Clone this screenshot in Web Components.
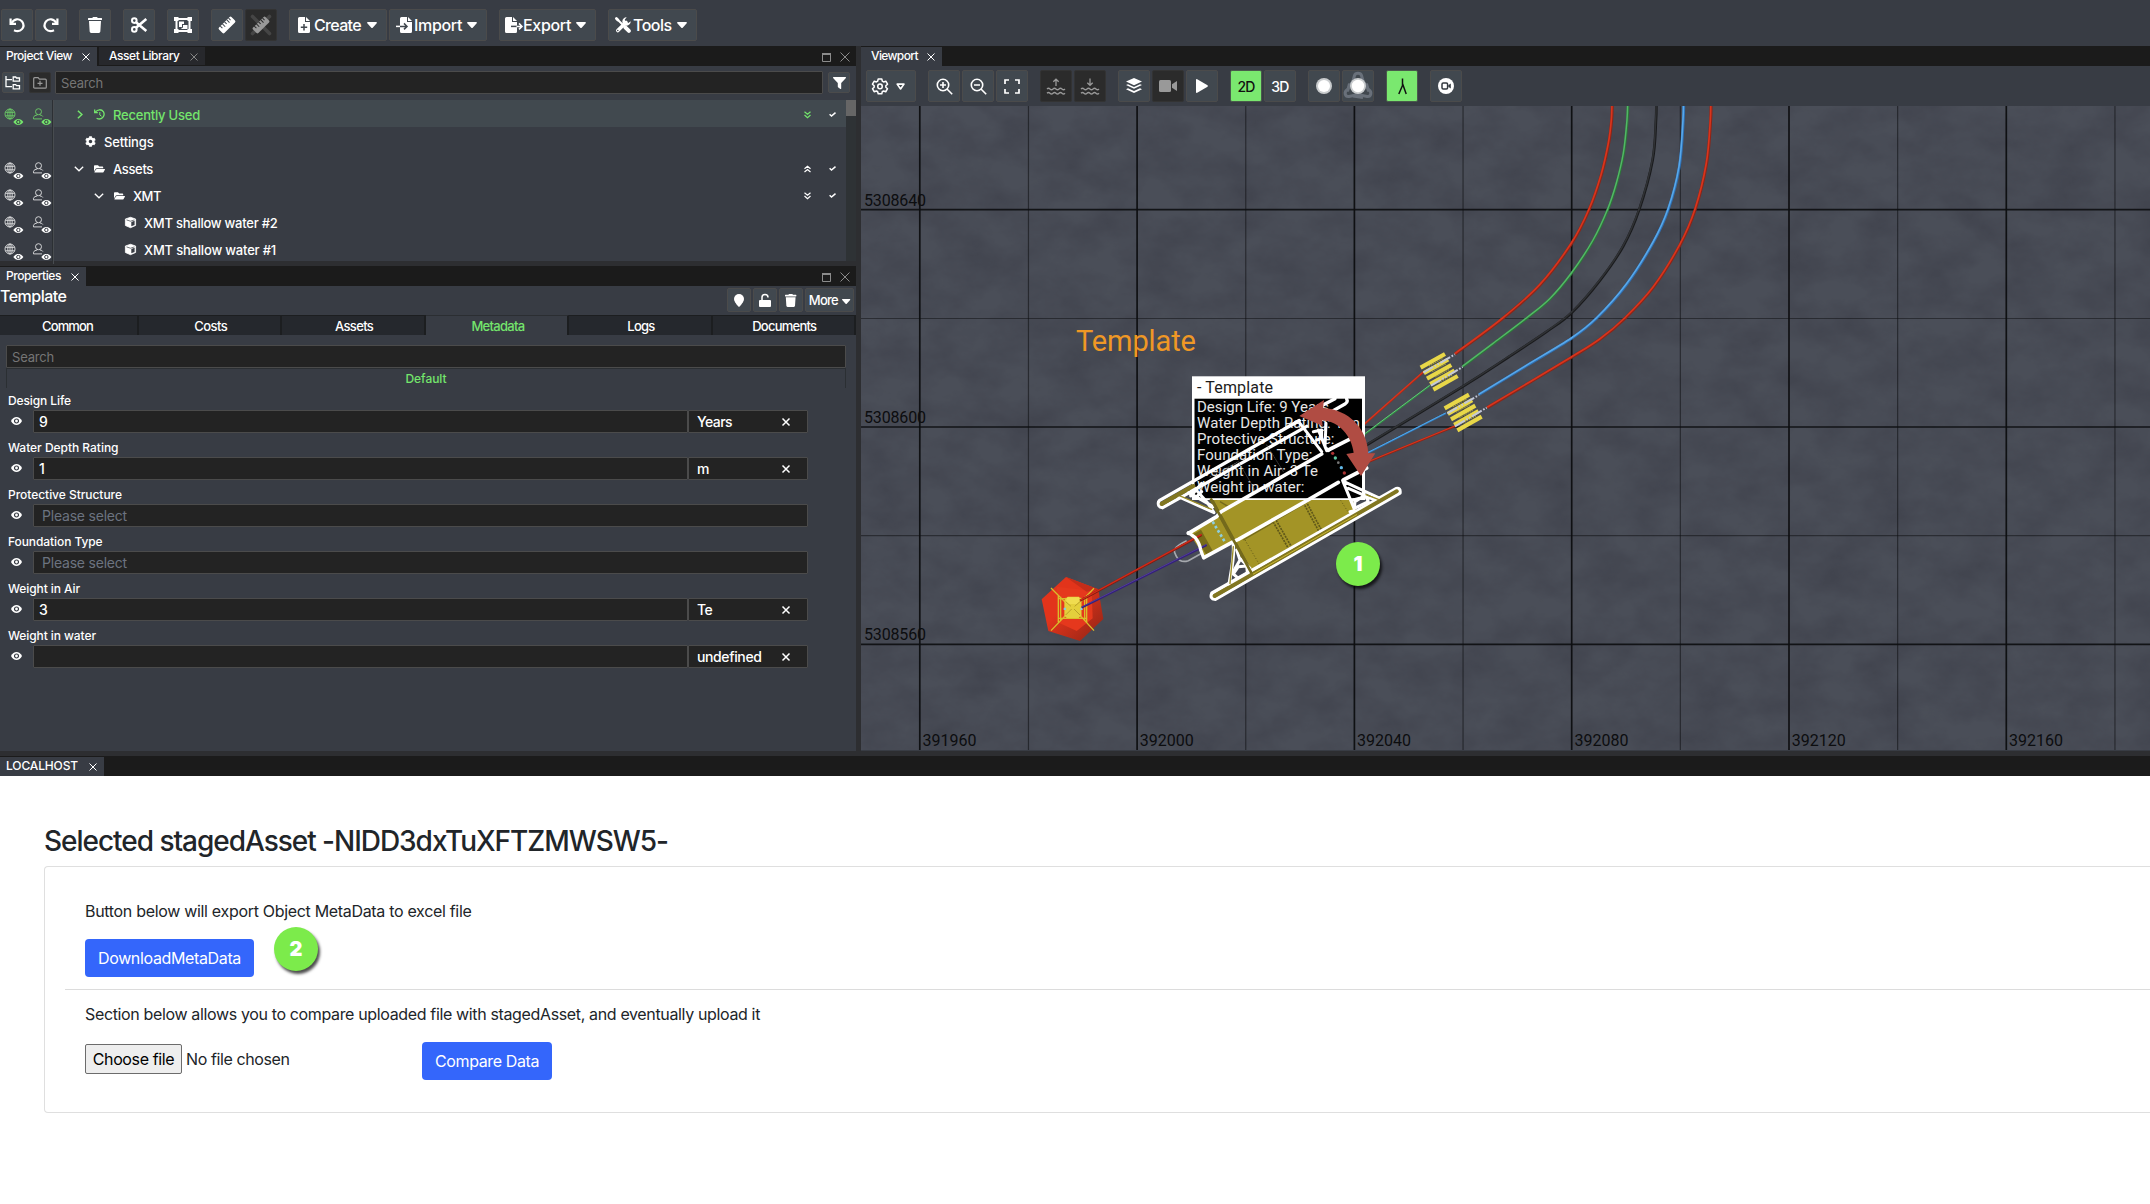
<!DOCTYPE html>
<html lang="en">
<head>
<meta charset="utf-8">
<title>Field planner</title>
<style>
  html, body { margin: 0; height: 1204px; overflow: hidden; background: #fff; }
  body { font-family: Inter, "Liberation Sans", sans-serif; font-size: 14px; color: #fff; }
</style>
</head>
<body>
<field-app></field-app>
<script>
const ICONS = {
  undo: [16, 16, '<g fill="none" stroke="currentColor" stroke-width="2.200"><path d="M1.600 1.600V6.800H7"/><path d="M2.400 6.400C5 1.600 10.200 1 13 4.400 17 10 11.600 16.500 5 13.200"/></g>'],
  redo: [16, 16, '<g fill="none" stroke="currentColor" stroke-width="2.200" transform="matrix(-1 0 0 1 16 0)"><path d="M1.600 1.600V6.800H7"/><path d="M2.400 6.400C5 1.600 10.200 1 13 4.400 17 10 11.600 16.500 5 13.200"/></g>'],
  trash: [14, 16, '<path transform="scale(.03125)" fill="currentColor" d="M432 32H312l-9.400-18.700A24 24 0 0 0 281.100 0H166.800a23.720 23.720 0 0 0-21.400 13.300L136 32H16A16 16 0 0 0 0 48v32a16 16 0 0 0 16 16h416a16 16 0 0 0 16-16V48a16 16 0 0 0-16-16zM32 128 53.200 467a48 48 0 0 0 47.900 45h245.800a48 48 0 0 0 47.900-45L416 128z"/>'],
  cut: [16, 16, '<g fill="none" stroke="currentColor"><circle cx="3.300" cy="3.600" r="2.300" stroke-width="2"/><circle cx="3.300" cy="12.400" r="2.300" stroke-width="2"/><path stroke-width="2.600" d="M5 5.200 15.300 14M5 10.800 15.300 2"/></g>'],
  group: [18, 16, '<g fill="none" stroke="currentColor" stroke-width="2"><path d="M2.500 2h13v12h-13z"/></g><path fill="currentColor" d="M0 0h4.500v4H0zM13.500 0H18v4h-4.500zM0 12h4.500v4H0zM13.500 12H18v4h-4.500zM5 4.500h5V7H8v3H5zM9 8h4.500v4H7.500v-1.200H9z"/>'],
  ruler: [16, 16, '<g transform="rotate(-45 8 8)"><rect x="-.8" y="4.200" width="17.600" height="7.600" rx="1.300" fill="currentColor"/><path d="M2.500 4v3M5.500 4v4M8.500 4v3M11.500 4v4M14 4v3" stroke="#41484f" stroke-width="1"/></g>'],
  rulerOff: [20, 20, '<path d="M1.500 1.500 18.500 18.500M18.500 1.500 1.500 18.500" stroke="#454545" stroke-width="3.600" stroke-linecap="round"/><g transform="translate(2 2) rotate(-45 8 8)"><rect x="-.8" y="4.200" width="17.600" height="7.600" rx="1.300" fill="#999"/><path d="M2.500 4v3M5.500 4v4M8.500 4v3M11.500 4v4M14 4v3" stroke="#2b2b2b"/></g>'],
  fileAdd: [12, 16, '<path fill="currentColor" d="M1.500 0H7v5h5v9.500A1.500 1.500 0 0 1 10.500 16h-9A1.500 1.500 0 0 1 0 14.500v-13A1.500 1.500 0 0 1 1.500 0zM8 0l4 4H8z"/><path d="M6 7v6.400M2.800 10.200h6.400" stroke="#41484f" stroke-width="1.500"/>'],
  fileIn: [16, 16, '<path fill="currentColor" d="M5.500 0H11v5h5v9.500a1.500 1.500 0 0 1-1.500 1.500h-9A1.500 1.500 0 0 1 4 14.500v-13A1.500 1.500 0 0 1 5.500 0zM12 0l4 4h-4z"/><path d="M4 9.400h6.500M8 6.400l3 3-3 3" stroke="#41484f" stroke-width="1.500" fill="none"/><path d="M0 9.400h4" stroke="currentColor" stroke-width="1.500"/>'],
  fileOut: [18, 16, '<path fill="currentColor" d="M1.500 0H7v5h5v9.500A1.500 1.500 0 0 1 10.500 16h-9A1.500 1.500 0 0 1 0 14.500v-13A1.500 1.500 0 0 1 1.500 0zM8 0l4 4H8z"/><path d="M6 9.400h6" stroke="#41484f" stroke-width="1.500"/><path d="M11.500 9.400h5.500M14 6.400l3 3-3 3" stroke="currentColor" stroke-width="1.500" fill="none"/>'],
  tools: [16, 16, '<g stroke="currentColor" stroke-linecap="round"><path d="M2.800 13.600 11 5.400" stroke-width="3.600"/><path d="M3 3l5 5" stroke-width="2"/><path d="M1.400 1.400l1.500 1.500" stroke-width="2.800"/><path d="M10.300 10.300l3.600 3.600" stroke-width="4"/></g><path d="M15.700 4.300a4.200 4.200 0 1 1-4-4L9.800 2.600l.6 2.700 2.900.7z" fill="currentColor"/><circle cx="2.800" cy="13.500" r=".8" fill="#41484f"/>'],
  caret: [10, 6, '<path d="M.9 0h8.200c.8 0 1.100.8.6 1.300L5.700 5.700a1 1 0 0 1-1.400 0L.3 1.300C-.2.800.100 0 .9 0z" fill="currentColor"/>'],
  caretLine: [8, 7, '<path d="M1 1h6L4 5.200z" fill="none" stroke="currentColor" stroke-width="1.400" stroke-linejoin="round"/>'],
  close: [8, 8, '<path d="M.5.500l7 7M7.500.500l-7 7" stroke="currentColor" stroke-width="1"/>'],
  closeBig: [10, 10, '<path d="M.5.500l9 9M9.500.500l-9 9" stroke="currentColor" stroke-width="1"/>'],
  max: [9, 9, '<path d="M.5 1h8v7.500h-8z" fill="none" stroke="currentColor"/><path d="M0 1h9" stroke="currentColor" stroke-width="2"/>'],
  cross: [8, 8, '<path d="M.5.500l7 7M7.500.500l-7 7" stroke="currentColor" stroke-width="1.500"/>'],
  hier: [16, 14, '<g fill="none" stroke="currentColor" stroke-width="1.300"><path d="M1 0v10.700h6M1 3.600h6"/><path d="M8.200 1h2.500l.8 1h3v3.200H8.200zM8.200 8.600h2.500l.8 1h3v3.200H8.200z"/></g>'],
  folderAdd: [14, 12, '<g fill="none" stroke="currentColor" stroke-width="1.200"><path d="M.7 1.700Q.7.700 1.700.7h3.400l1.300 1.500h5.900q1 0 1 1v7q0 1-1 1H1.700q-1 0-1-1z"/><path d="M7 3.800v5M4.500 6.300h5"/></g>'],
  filter: [13, 12, '<path d="M.7 0h11.600c.7 0 .9.700.4 1.200L8.200 6v5.500c0 .5-.5.600-.8.400L5.300 10.500 4.800 9.800V6L.300 1.200C-.2.700 0 0 .7 0z" fill="currentColor"/>'],
  globe: [20, 19, '<g fill="none" stroke="currentColor" stroke-width=".9" opacity=".85"><circle cx="6" cy="7" r="5"/><ellipse cx="6" cy="7" rx="2.200" ry="5"/><path d="M1.400 5.300h9.200M1.400 8.800h9.200M6 2v10"/></g><path d="M9.300 15C12 11 16.700 11 19.400 15 16.700 19 12 19 9.300 15z" fill="currentColor"/><circle cx="14.350" cy="15" r="1.700" fill="none" stroke="#383c44" stroke-width="1"/>'],
  user: [20, 19, '<g fill="none" stroke="currentColor" stroke-width=".9" opacity=".85"><circle cx="6.500" cy="4.700" r="3"/><path d="M10 11.900H1.500V10.300C2 8.800 3.500 8.300 5.300 8V7.300M7.800 7.300V8c1.600.2 2.600.7 3 1.400"/></g><path d="M9.300 15C12 11 16.700 11 19.400 15 16.700 19 12 19 9.300 15z" fill="currentColor"/><circle cx="14.350" cy="15" r="1.700" fill="none" stroke="#383c44" stroke-width="1"/>'],
  right: [6, 9, '<path d="M.9.700l4 3.800-4 3.800" fill="none" stroke="currentColor" stroke-width="1.500"/>'],
  down: [10, 6, '<path d="M.8.800L5 4.800 9.200.8" fill="none" stroke="currentColor" stroke-width="1.300"/>'],
  history: [11, 11, '<g fill="none" stroke="currentColor" stroke-width="1.300"><path d="M1.500 3C3.500.1 7.600 0 9.500 2.900 11.500 7 7.500 11.800 2.600 9.200M.7.500v3.100h3.100"/><path d="M5.800 3v3l1.700 1.200" stroke-width="1"/></g>'],
  cog: [11, 11, '<path transform="scale(.0215)" fill="currentColor" d="M487.400 315.700l-42.600-24.600c4.300-23.200 4.300-47 0-70.200l42.600-24.600c4.900-2.800 7.100-8.600 5.500-14-11.100-35.600-30-67.800-54.700-94.600-3.800-4.100-10-5.100-14.800-2.300L380.800 110c-17.900-15.400-38.500-27.300-60.800-35.100V25.800c0-5.600-3.900-10.500-9.400-11.700-36.700-8.200-74.300-7.800-109.200 0-5.500 1.200-9.400 6.100-9.400 11.700V75c-22.200 7.900-42.800 19.800-60.800 35.100L88.700 85.500c-4.900-2.800-11-1.900-14.800 2.300-24.700 26.700-43.600 58.900-54.700 94.600-1.700 5.400.6 11.200 5.500 14L67.300 221c-4.300 23.200-4.300 47 0 70.200l-42.600 24.600c-4.900 2.800-7.100 8.600-5.500 14 11.100 35.600 30 67.800 54.700 94.600 3.800 4.100 10 5.100 14.800 2.300l42.600-24.600c17.900 15.400 38.500 27.300 60.800 35.100v49.200c0 5.600 3.900 10.500 9.400 11.700 36.700 8.200 74.300 7.800 109.200 0 5.500-1.200 9.400-6.100 9.400-11.700v-49.200c22.200-7.900 42.800-19.800 60.800-35.100l42.600 24.600c4.900 2.800 11 1.900 14.800-2.300 24.700-26.700 43.600-58.900 54.700-94.600 1.500-5.500-.7-11.300-5.600-14.100zM256 336c-44.100 0-80-35.900-80-80s35.900-80 80-80 80 35.900 80 80-35.900 80-80 80z"/>'],
  folder: [11, 10, '<path transform="scale(.0192)" fill="currentColor" d="M572.700 292.100L500.300 416.200A64 64 0 0 1 445 448H45c-18.500 0-30-20-20.700-36l72.400-124.200A64 64 0 0 1 152 256h400c18.500 0 30 20 20.700 36.100zM152 224h328v-48c0-26.500-21.500-48-48-48H272l-64-64H48C21.500 64 0 85.500 0 112v278l69-118.400C86.200 242.300 118 224 152 224z"/>'],
  cube: [11, 11, '<path d="M5.500.3 10.600 2v6.500L5.500 10.700.4 8.500V2z" fill="currentColor" stroke="currentColor" stroke-width=".8" stroke-linejoin="round"/><path d="M6.300 4.900 9.600 3.700V7.900L6.300 9.300z" fill="#383c44"/><path d="M1.500 2.900l4 1.300 4-1.300" fill="none" stroke="#383c44" stroke-width=".7"/>'],
  dblDown: [7, 8, '<path d="M.5.800l3 2.400 3-2.400M.5 4l3 2.700L6.500 4" fill="none" stroke="currentColor" stroke-width="1.200"/>'],
  dblUp: [7, 8, '<path d="M.5 3.700l3-2.500 3 2.500M.5 7l3-2.500L6.500 7" fill="none" stroke="currentColor" stroke-width="1.200"/>'],
  check: [7, 5, '<path d="M.6 2.300l1.900 1.700L6.500.6" fill="none" stroke="currentColor" stroke-width="1.500"/>'],
  eye: [11, 8, '<path d="M0 4C2.500-1.200 8.500-1.200 11 4 8.500 9.200 2.500 9.200 0 4z" fill="currentColor"/><circle cx="5.500" cy="4" r="2" fill="none" stroke="#383c44" stroke-width="1.200"/>'],
  pin: [10, 13, '<path d="M5 0a5 5 0 0 1 5 5c0 2-1.500 4-4.300 7.500q-.7.700-1.400 0C1.500 9 0 7 0 5a5 5 0 0 1 5-5z" fill="currentColor"/>'],
  unlock: [12, 13, '<rect y="6" width="12" height="7" rx="1" fill="currentColor"/><path d="M3 6.500V3.500a3 3 0 0 1 6 0" fill="none" stroke="currentColor" stroke-width="1.500"/>'],
  gear: [17, 17, '<g fill="none" stroke="currentColor" stroke-width="1.600" stroke-linejoin="round"><path d="M6.600 1h3.800l.6 2.400 1.300.8 2.400-.8 1.800 3.200-1.800 1.700v1.500l1.800 1.600-1.900 3.200-2.300-.8-1.400.8-.5 2.200H6.600L6 14.600l-1.300-.8-2.400.8L.5 11.400l1.800-1.600V8.300L.5 6.600l1.900-3.200 2.300.8L6 3.400z"/><circle cx="8.500" cy="8.900" r="2.400"/></g>'],
  zoomIn: [17, 17, '<g fill="none" stroke="currentColor" stroke-width="1.600"><circle cx="7" cy="7" r="5.700"/><path d="M11 11l5.200 5.200M7 4v6M4 7h6"/></g>'],
  zoomOut: [17, 17, '<g fill="none" stroke="currentColor" stroke-width="1.600"><circle cx="7" cy="7" r="5.700"/><path d="M11 11l5.200 5.200M4 7h6"/></g>'],
  fit: [16, 15, '<path d="M1 5V1h4M11 1h4v4M15 10v4h-4M5 14H1v-4" fill="none" stroke="currentColor" stroke-width="1.700"/>'],
  waveUp: [18, 17, '<g fill="none" stroke="currentColor" stroke-width="1.300"><path d="M9 8V1.200M6.300 3.800 9 1.200l2.700 2.600"/><path d="M0 11q1.500-1.500 3 0t3 0 3 0 3 0 3 0 3 0M0 15.300q1.500-1.500 3 0t3 0 3 0 3 0 3 0 3 0"/></g>'],
  waveDown: [18, 17, '<g fill="none" stroke="currentColor" stroke-width="1.300"><path d="M9 .5v6.800M6.300 4.700 9 7.300l2.700-2.600"/><path d="M0 11q1.500-1.500 3 0t3 0 3 0 3 0 3 0 3 0M0 15.300q1.500-1.500 3 0t3 0 3 0 3 0 3 0 3 0"/></g>'],
  layers: [16, 16, '<path d="M8 0l8 3.600-8 3.700-8-3.700zM0 7.100l2-.9 6 2.800 6-2.800 2 .9-8 3.700zM0 11.200l2-.9 6 2.800 6-2.800 2 .9-8 3.800z" fill="currentColor"/>'],
  video: [18, 12, '<rect width="12" height="12" rx="1.500" fill="currentColor"/><path d="M13 4.200 18 1v10l-5-3.200z" fill="currentColor"/>'],
  play: [12, 14, '<path d="M0 .9Q.1-.3 1.200.2L11.500 6.200q.9.800 0 1.600L1.200 13.800Q.1 14.300 0 13.100z" fill="currentColor"/>'],
  ball: [16, 16, '<circle cx="8" cy="8" r="8" fill="#c9ccce"/><circle cx="8" cy="8" r="6" fill="#fff"/>'],
  orbit: [30, 28, '<g fill="none" stroke="#69707a" stroke-width="3"><path d="M11.500 3.500C12.500.5 17.500.5 18.500 3.500L20 9 25.500 17.500C29.500 20 28 25 24 24.500L15 22.500 6 24.500C2 25 .5 20 4.500 17.500L10 9z"/><path d="M6.500 11.500 4.500 19.500M23.500 11.500l2 8M10 24l10 1.500"/></g><circle cx="15" cy="14" r="8" fill="#c9ccce"/><circle cx="15" cy="14" r="6.200" fill="#fff"/>'],
  lambda: [9, 17, '<path d="M4.500.5v7M4.500 7.500.8 16M4.500 5.500 8.200 16" fill="none" stroke="#111" stroke-width="1.500"/>'],
  camRound: [16, 16, '<circle cx="8" cy="8" r="8" fill="#fff"/><rect x="4" y="5" width="5.600" height="6" rx="1.200" fill="none" stroke="#343a40" stroke-width="1.500"/><path d="M10.300 7.200 12.800 5.400v5.200l-2.500-1.800z" fill="#343a40"/>'],
};

const define = (tag, css, html, extra) => {
  const tpl = document.createElement('template');
  tpl.innerHTML = `<style>*{box-sizing:border-box}${css}</style>${typeof html === 'string' ? html : ''}`;
  customElements.define(tag, class extends HTMLElement {
    connectedCallback() {
      if (this.shadowRoot) return;
      const root = this.attachShadow({ mode: 'open' });
      root.appendChild(tpl.content.cloneNode(true));
      if (typeof html === 'function') root.innerHTML = tpl.innerHTML + html(this);
      if (extra) extra(this, root);
    }
  });
};

define('field-app', `
  :host { display: flex; flex-direction: column; width: 2150px; height: 1204px; background: #2d2e31; }
  .mid { display: flex; height: 705px; gap: 5px; flex: none; }
  .left { width: 856px; display: flex; flex-direction: column; gap: 5px; flex: none; }
  map-view { flex: 1; }
  plugin-page { margin-top: 5px; flex: 1; }
`, `<main-toolbar></main-toolbar>
  <div class="mid"><div class="left"><project-panel></project-panel><properties-panel></properties-panel></div><map-view></map-view></div>
  <plugin-page></plugin-page>`);

define('main-toolbar', `
  :host { display: flex; height: 46px; flex: none; background: #383c44; padding: 9px 0 0 1px; gap: 12px; }
  .g { display: flex; gap: 2px; }
  tool-button { width: 32px; height: 32px; font-size: 16px; font-weight: 500; }
  .m { justify-content: flex-start; }
  .m .ca { margin-left: 6px; }
`, `
  <div class="g"><tool-button><ui-icon name="undo"></ui-icon></tool-button><tool-button><ui-icon name="redo"></ui-icon></tool-button></div>
  <tool-button><ui-icon name="trash"></ui-icon></tool-button>
  <tool-button><ui-icon name="cut"></ui-icon></tool-button>
  <tool-button><ui-icon name="group"></ui-icon></tool-button>
  <div class="g"><tool-button><ui-icon name="ruler"></ui-icon></tool-button><tool-button off><ui-icon name="rulerOff"></ui-icon></tool-button></div>
  <div class="g">
    <tool-button class="m" style="width:98px;padding-left:8px"><ui-icon name="fileAdd"></ui-icon><fit-text w="47" style="margin-left:4px">Create</fit-text><ui-icon class="ca" name="caret" style="margin-left:5.500px"></ui-icon></tool-button>
    <tool-button class="m" style="width:98px;padding-left:6px"><ui-icon name="fileIn"></ui-icon><fit-text w="48" style="margin-left:2px">Import</fit-text><ui-icon class="ca" name="caret" style="margin-left:5px"></ui-icon></tool-button>
  </div>
  <tool-button class="m" style="width:97px;padding-left:5px"><ui-icon name="fileOut"></ui-icon><fit-text w="48">Export</fit-text><ui-icon class="ca" name="caret" style="margin-left:4.500px"></ui-icon></tool-button>
  <tool-button class="m" style="width:89px;padding-left:6px"><ui-icon name="tools"></ui-icon><fit-text w="38.500" style="margin-left:2px">Tools</fit-text><ui-icon class="ca" name="caret" style="margin-left:5px"></ui-icon></tool-button>`);

define('tool-button', `
  :host { display: flex; box-sizing: border-box; align-items: center; justify-content: center; flex: none; background: #41484f; border: 1px solid #4b4b4b; border-radius: 2px; }
  :host([off]) { background: #2b2b2b; border-color: #333; color: #999; }
  :host([on]) { background: #7ae86f; border-color: #4a5a4c; color: #111; }
`, '<slot></slot>');

define('dock-strip', `
  :host { display: flex; height: 20px; flex: none; background: #1b1b1b; gap: 2px; padding-top: 1px; font-size: 12px; font-weight: 500; }
  .end { margin-left: auto; display: flex; gap: 9px; align-items: center; padding: 1px 6px 0 0; color: #8b8b8b; }
`, el => `<slot></slot>${el.hasAttribute('controls') ? '<div class="end"><ui-icon name="max"></ui-icon><ui-icon name="closeBig"></ui-icon></div>' : ''}`);

define('dock-tab', `
  :host { display: flex; box-sizing: border-box; height: 19px; background: #383c44; align-items: center; padding: 0 7px 1px 6px; justify-content: space-between; line-height: 18px; }
  :host([idle]) { background: #27282c; height: 18px; padding-left: 10px; }
  :host([idle]) ui-icon { color: #858585; }
  ui-icon { margin-top: 2px; }
`, '<slot></slot><ui-icon name="close"></ui-icon>');

define('project-panel', `
  :host { display: flex; flex-direction: column; height: 215px; flex: none; background: #383c44; }
  .bar { display: flex; height: 34px; padding: 6px 6px 0 2px; }
  .bar tool-button { width: 22px; height: 21px; }
  text-box { flex: 1; margin: -1px 5px 0 4px; height: 23px; }
  .tree { display: flex; flex: 1; }
  .rows { flex: 1; }
  .sb { width: 10px; background: #2e3235; }
  .sb i { display: block; height: 16px; background: #666; }
`, `
  <dock-strip controls><dock-tab style="width:97px"><fit-text w="66">Project View</fit-text></dock-tab><dock-tab idle style="width:106px"><fit-text w="70.500">Asset Library</fit-text></dock-tab></dock-strip>
  <div class="bar"><tool-button><ui-icon name="hier"></ui-icon></tool-button><tool-button off style="margin-left:5px"><ui-icon name="folderAdd"></ui-icon></tool-button>
  <text-box hint style="padding-top:1px"><fit-text w="42">Search</fit-text></text-box><tool-button><ui-icon name="filter"></ui-icon></tool-button></div>
  <div class="tree"><div class="rows">
    <tree-row active vis icon="history" twist="right" pad="26" fold="dblDown"><fit-text w="87">Recently Used</fit-text></tree-row>
    <tree-row icon="cog" pad="34"><fit-text w="49.500">Settings</fit-text></tree-row>
    <tree-row vis icon="folder" twist="down" pad="23" fold="dblUp"><fit-text w="40">Assets</fit-text></tree-row>
    <tree-row vis icon="folder" twist="down" pad="43" fold="dblDown"><fit-text w="28">XMT</fit-text></tree-row>
    <tree-row vis icon="cube" pad="74"><fit-text w="133.500">XMT shallow water #2</fit-text></tree-row>
    <tree-row vis icon="cube" pad="74"><fit-text w="132">XMT shallow water #1</fit-text></tree-row>
  </div><div class="sb"><i></i></div></div>`);

define('tree-row', `
  :host { display: flex; height: 27px; font-size: 13px; font-weight: 500; color: #fff; }
  :host(:last-child) { height: 26px; }
  :host([active]) { background: #41494f; color: #74e56c; }
  .vis { width: 53px; flex: none; border-right: 1px solid #2c3034; padding: 7px 0 0 4px; display: flex; gap: 8px; overflow: hidden; }
  .main { flex: 1; display: flex; align-items: center; height: 29px; border-left: 1px solid #484c50; }
  .main > ui-icon, ::slotted(*) { flex: none; }
  .lab { margin-left: 8px; }
  .end { margin-left: auto; display: flex; gap: 18px; padding-right: 10px; align-items: center; }
  .end .ck { color: #fff; }
`, el => {
  const g = n => el.getAttribute(n);
  const gap = g('twist') === 'right' ? 11 : 10;
  return `<div class="vis">${el.hasAttribute('vis') ? '<ui-icon name="globe"></ui-icon><ui-icon name="user"></ui-icon>' : ''}</div>
  <div class="main" style="padding-left:${g('pad') - 3}px">${g('twist') ? `<ui-icon name="${g('twist')}" style="margin-right:${gap}px"></ui-icon>` : ''}<ui-icon name="${g('icon')}"></ui-icon><span class="lab"><slot></slot></span>
  ${g('fold') ? `<span class="end"><ui-icon name="${g('fold')}"></ui-icon><ui-icon class="ck" name="check"></ui-icon></span>` : ''}</div>`;
});

define('text-box', `
  :host { display: flex; box-sizing: border-box; align-items: center; height: 23px; background: #232323; border: 1px solid #4b4b4b; border-radius: 1px; padding: 0 0 0 5px; font-size: 14px; color: #fff; }
  :host([hint]) { color: #757575; font-size: 13px; }
`, '<slot></slot>');

define('properties-panel', `
  :host { display: flex; flex-direction: column; flex: 1; background: #383c44; }
  .head { display: flex; height: 29px; padding: 2px 2px 0 0; gap: 2px; }
  .head tool-button { width: 24px; height: 24px; font-size: 13px; font-weight: 500; }
  .title { font-size: 16px; font-weight: 500; margin: -4px auto 0 0; line-height: 24px; }
  .tabs { display: flex; height: 20px; font-size: 13px; font-weight: 500; }
  .tabs div { width: 143.400px; background: #25282d; border-right: 2px solid #1c1e20; border-top: 1px solid #1c1e20; display: flex; justify-content: center; align-items: center; padding: 0 0 0 2px; }
  .tabs div:first-child { width: 139px; padding: 0 2px 0 0; }
  .tabs .on { background: none; color: #74e56c; border-top-color: #2b2e32; padding: 0 0 0 3px; }
  .body { padding: 10px 10px 0 6px; }
  .def { height: 20px; border: 1px solid #2b2f33; border-bottom: 0; display: flex; justify-content: center; align-items: center; color: #74e56c; font-size: 12px; font-weight: 500; padding-bottom: 1px; }
  .list { display: flex; flex-direction: column; padding: 4px 38px 0 2px; }
`, `
  <dock-strip controls><dock-tab style="width:86px"><fit-text w="55">Properties</fit-text></dock-tab></dock-strip>
  <div class="head"><fit-text class="title" w="66.500">Template</fit-text>
    <tool-button><ui-icon name="pin"></ui-icon></tool-button><tool-button><ui-icon name="unlock"></ui-icon></tool-button><tool-button><ui-icon name="trash" size="13"></ui-icon></tool-button>
    <tool-button style="width:49px;gap:4px"><fit-text w="29">More</fit-text><ui-icon name="caret" size="5" style="margin-top:2px"></ui-icon></tool-button></div>
  <div class="tabs"><div><fit-text w="51">Common</fit-text></div><div><fit-text w="33">Costs</fit-text></div><div><fit-text w="38">Assets</fit-text></div><div class="on"><fit-text w="53">Metadata</fit-text></div><div><fit-text w="27">Logs</fit-text></div><div><fit-text w="64">Documents</fit-text></div></div>
  <div class="body"><text-box hint style="padding-top:1px"><fit-text w="42">Search</fit-text></text-box><div class="def"><fit-text w="41">Default</fit-text></div>
  <div class="list">
    <prop-field label="Design Life" lw="63" value="9" unit="Years" uw="35"></prop-field>
    <prop-field label="Water Depth Rating" lw="110.500" value="1" unit="m" uw="12"></prop-field>
    <prop-field label="Protective Structure" lw="114" select></prop-field>
    <prop-field label="Foundation Type" lw="94.500" select></prop-field>
    <prop-field label="Weight in Air" lw="72" value="3" unit="Te" uw="15"></prop-field>
    <prop-field label="Weight in water" lw="88" value="" unit="undefined" uw="64.500"></prop-field>
  </div></div>`);

define('prop-field', `
  :host { display: flex; flex-direction: column; height: 47px; font-weight: 500; }
  .l { font-size: 12px; height: 18px; line-height: 18px; }
  .r { display: flex; }
  .e { display: flex; align-items: flex-start; width: 25px; padding: 7px 0 0 3px; flex: none; }
  .v { flex: 1; }
  .u { width: 120px; padding: 0 17px 0 8px; justify-content: space-between; }
  .ph { color: #6c7380; padding-left: 8px; font-weight: 400; }
`, el => {
  const g = n => el.getAttribute(n);
  return `<div class="l"><fit-text w="${g('lw')}">${g('label')}</fit-text></div><div class="r"><span class="e"><ui-icon name="eye"></ui-icon></span>${el.hasAttribute('select')
    ? '<text-box class="v ph"><fit-text w="85">Please select</fit-text></text-box>'
    : `<text-box class="v">${g('value')}</text-box><text-box class="u"><fit-text w="${g('uw')}">${g('unit')}</fit-text><ui-icon name="cross" style="margin:0 0 0 auto"></ui-icon></text-box>`}</div>`;
});

// Catmull-Rom spline through cable way-points
const spline = p => {
  let d = `M${p[0]}`;
  for (let i = 0; i < p.length - 1; i++) {
    const a = p[i - 1] || p[i], b = p[i], c = p[i + 1], e = p[i + 2] || c;
    d += `C${b[0] + (c[0] - a[0]) / 6} ${b[1] + (c[1] - a[1]) / 6} ${c[0] - (e[0] - b[0]) / 6} ${c[1] - (e[1] - b[1]) / 6} ${c[0]} ${c[1]}`;
  }
  return d;
};
const cable = (pts, dark, light, w = 9) => {
  const d = spline(pts);
  return `<path d="${d}" stroke="${dark}" stroke-width="${w}"/><path d="${d}" stroke="${light}" stroke-width="${w * .55}" transform="translate(-1 -1)"/>`;
};
const sleeve = (x, y) => {
  let s = '';
  for (let i = 0; i < 5; i++) s += `<path d="M${x + i * 9.500} ${y + i * 16.500}l73-41" stroke="#e8d748" stroke-width="12.500"/>`;
  for (const i of [0, 1, 2, 3]) s += `<path d="M${x + 25 + i * 9.500} ${y - 5 + i * 16.500}l42-23" stroke="#a89f3c" stroke-width="4" stroke-dasharray="4 3"/>`;
  return s + `<path d="M${x + 8} ${y + 15}l95-55M${x + 31} ${y + 54}l95-56" stroke="#c3c8da" stroke-width="6" stroke-dasharray="34 5 5 5 5 5"/>`;
};
const mapSvg = () => {
  let grid = '';
  for (let i = 0; i < 12; i++) { const x = 919.800 + i * 108.650; grid += `<path d="M${x} 106V750" stroke="#0d0e10" stroke-width="${i % 2 ? 1.200 : 1.700}" opacity="${i % 2 ? .55 : .95}"/>`; }
  [[209.700, 1], [318.500, 0], [427, 1], [535.600, 0], [644.300, 1]].forEach(([y, m]) => grid += `<path d="M861 ${y}H2150" stroke="#0d0e10" stroke-width="${m ? 1.700 : 1.200}" opacity="${m ? .9 : .5}"/>`);
  let labs = '';
  ['391960', '392000', '392040', '392080', '392120', '392160'].forEach((t, i) => labs += `<text x="${922.500 + i * 217.300}" y="746" textLength="54">${t}</text>`);
  [['5308640', 205.500], ['5308600', 422.500], ['5308560', 640]].forEach(([t, y]) => labs += `<text x="864" y="${y}" textLength="62">${t}</text>`);
  const cables = [
    cable([[757, 0], [755, 60], [746, 130], [724, 225], [688, 328], [635, 430], [540, 555], [425, 658], [285, 762]], '#8e2417', '#d8351d') +
    cable([[190, 817], [10, 976]], '#a52a1b', '#d8351d', 6),
    cable([[804, 0], [802, 60], [791, 160], [770, 250], [744, 328], [700, 421], [635, 520], [570, 597], [500, 655], [400, 731], [308, 800]], '#2c7838', '#53b667', 8) +
    cable([[210, 857], [10, 1006]], '#2f8a43', '#6cc77f', 5),
    cable([[889, 0], [888, 60], [878, 180], [838, 328], [790, 438], [720, 541], [635, 638], [560, 695], [440, 775], [308, 860], [10, 1041]], '#1a1b1d', '#303235', 8),
    cable([[971, 0], [970, 60], [958, 200], [925, 328], [880, 427], [800, 553], [710, 655], [635, 715], [500, 797], [357, 884]], '#2f70b3', '#58a8ea', 8.500) +
    cable([[258, 940], [10, 1066]], '#2f78ba', '#58aef0', 5),
    cable([[1053, 0], [1052, 60], [1040, 190], [1006, 328], [960, 435], [880, 562], [795, 655], [720, 718], [635, 772], [382, 923]], '#8e2417', '#d8351d') +
    cable([[287, 978], [10, 1092]], '#8e2417', '#d8351d', 6)
  ].join('');
  const rows = [['Design Life: 9 Years', 132], ['Water Depth Rating: 1 m', 163], ['Protective Structure:', 137.500], ['Foundation Type:', 115.500], ['Weight in Air: 3 Te', 121], ['Weight in water:', 107.500]];
  return `<svg viewBox="861 106 1289 644" width="1289" height="644" font-family="Roboto, sans-serif">
  <defs>
    <filter id="floor" x="0" y="0" width="1" height="1" color-interpolation-filters="sRGB"><feTurbulence type="fractalNoise" baseFrequency=".022 .032" numOctaves="5" seed="7"/><feColorMatrix values="0 0 0 0 .18  0 0 0 0 .18  0 0 0 0 .22  1.600 0 0 0 -.5"/></filter>
    <linearGradient id="rock" x1="0" y1="0" x2="1" y2="1"><stop offset=".4" stop-color="#e2341b"/><stop offset="1" stop-color="#8e2416"/></linearGradient>
  </defs>
  <rect x="861" y="106" width="1289" height="644" fill="#4a4e58"/>
  <rect x="861" y="106" width="1289" height="644" filter="url(#floor)" opacity=".32"/>
  ${grid}
  <g font-size="16" fill="#0c0d0f" lengthAdjust="spacingAndGlyphs">${labs}</g>
  <g transform="translate(1360 100) scale(.33333)" fill="none">${cables}${sleeve(182, 803)}${sleeve(254, 925)}</g>
  <g transform="translate(1020 320) scale(.33333)" stroke-linejoin="round">
    <path d="M65 838L138 771 235 808 250 897 180 963 85 933z" fill="url(#rock)"/>
    <path d="M110 800L215 812 218 895 170 933 110 905z" fill="#e5381d"/><path d="M138 771L235 808 200 815z" fill="#c42d19"/>
    <path d="M500 662Q455 683 465 700 476 732 505 722L545 700" fill="none" stroke="#a6a9ae" stroke-width="5"/>
    <g fill="none" stroke="#d9bd2a" stroke-width="4"><path d="M93 804L135 846M222 805L182 846M93 932L135 888M222 932L182 888M115 825V907M200 825V907M122 830V903M194 830V903M115 836H200M115 895H200M138 833V892M182 833V892"/></g>
    <path d="M133 840l10-10h34l7 10v46l-8 8h-36l-7-8z" fill="#e4cf3c"/><path d="M143 832h34l3 10-8 10h-26l-8-10z" fill="#f0dc50"/><path d="M137 885l18-18M180 885l-18-18M137 845l16 14M180 845l-16 14" fill="none" stroke="#b9a028" stroke-width="3"/><path d="M131 863h7v7h-7zM181 863h7v7h-7z" fill="#86cfe0"/>
    <path d="M507 640L600 580 570 520 930 320 1010 575 700 757 645 665 555 712z" fill="#a39426"/>
    <path d="M521 642L543 629 578 692 560 706z" fill="#776b18"/>
    <path d="M425 552L975 240M582 828L1132 512" stroke="#8b7f22" stroke-width="12" stroke-linecap="round"/>
    <path d="M705 748L1005 577" stroke="#d8d9c8" stroke-width="4" stroke-dasharray="60 6 16 6"/>
    <path d="M700 762L1010 583" stroke="#b8a72a" stroke-width="6"/>
    <g stroke="#746a1c" stroke-width="11"><path d="M572 535L695 760"/></g>
    <g stroke="#5f5719" stroke-width="5" stroke-dasharray="6 3"><path d="M755 598L808 690M764 593L817 685M850 548L897 635M858 544L905 631"/><path d="M675 660L722 740M962 541L990 585" stroke-width="3" stroke-dasharray="3 6"/></g>
    <g stroke="#746a1c" stroke-width="4" fill="none"><path d="M670 660L760 607M770 600L855 550M720 740L810 690M815 685L900 637M905 630L988 583M600 545L625 560 655 541"/></g>
    <path d="M180 842L545 645" stroke="#7e1d13" stroke-width="7"/><path d="M180 841L545 643" stroke="#d22a18" stroke-width="4"/>
    <path d="M185 863L560 675" stroke="#34217a" stroke-width="6"/><path d="M185 861L560 673" stroke="#5d47a8" stroke-width="2"/>
    <path d="M578 605L616 668" stroke="#8ccfe0" stroke-width="8" stroke-dasharray="8 7"/>
  </g>
  <rect x="1192" y="376.300" width="173" height="123.700" fill="#fff"/><rect x="1194.500" y="398.700" width="167.500" height="99.500" fill="#000"/>
  <text x="1197" y="393" font-size="16" fill="#1c1c1c" textLength="76">- Template</text>
  <g font-size="15" fill="#e6e6e6">${rows.map(([t, w], i) => `<text x="1197" y="${412 + i * 16}" textLength="${w}">${t}</text>`).join('')}</g>
  <g transform="translate(1020 320) scale(.33333)" fill="none" stroke="#fff" stroke-width="9" stroke-linejoin="round" stroke-linecap="round">
    <path d="M419 541L838 302M428 563L520 511 860 319M416 545Q412 561 428 563M880 270L945 236M925 280L975 252Q985 246 980 237" stroke-width="10"/>
    <path d="M576 819L1128 506Q1142 503 1140 519L586 838Q568 836 576 819" stroke-width="10"/>
    <path d="M505 640L590 590 602 576 905 402M553 712L640 665 655 658 850 548 955 487M925 390L1000 352M970 480L1040 444" stroke-width="11"/>
    <path d="M505 638L525 652Q540 672 542 690L551 714M640 672Q642 700 636 740L627 795" stroke-width="10"/>
    <path d="M475 530L582 578 560 545 520 500M505 517L580 560M515 500L512 528M545 490L520 520M525 535L545 515M840 310L905 395M895 330L920 392M918 310L915 380 925 392M880 335L905 330 905 355 890 360"/>
    <path d="M968 482L1002 565M972 485L1080 535M985 505L1035 527M1000 540L1035 530 1070 540M1003 565L1045 545 1035 525 1005 545zM990 575L1003 572"/>
    <path d="M650 690L660 720 637 760M655 740L680 738 682 760 655 775 640 762zM660 715L690 745M640 790L690 765"/>
    <path d="M748 350L838 298" stroke-width="4" stroke-dasharray="20 4"/>
    <g stroke="#777" stroke-width="2" stroke-dasharray="2 5"><path d="M655 425L705 510M740 375L790 455M600 455L655 425M570 470L650 430"/></g>
    <path d="M478 527L575 568M640 680L630 790M1038 524L1075 538" stroke="#9b8d27" stroke-width="4"/>
    <path d="M425 552L520 498M584 828L1130 514" stroke="#817620" stroke-width="12"/>
    <path d="M700 762L1010 584" stroke="#cdb92e" stroke-width="3"/>
    <path d="M572 535L695 760" stroke="#746a1c" stroke-width="8" stroke-linecap="butt"/>
  </g>
  <g transform="translate(1020 320) scale(.33333)">
    <circle cx="938" cy="400" r="5" fill="#a33"/><circle cx="946" cy="414" r="5" fill="#5cc6a0"/><circle cx="955" cy="428" r="4" fill="#777"/><circle cx="964" cy="443" r="5" fill="#62b9e8"/><circle cx="973" cy="459" r="5" fill="#a33"/>
    <path d="M838 288L912 240 909 264C985 268 1042 325 1045 400L1066 400 1023 468 979 402 1001 398C995 350 960 305 906 301L908 318z" fill="#b04c43"/>
  </g>
  <text x="1076" y="350.500" font-size="29" fill="#ef9825" textLength="120">Template</text>
  </svg>`;
};

define('map-view', `
  :host { display: flex; flex-direction: column; background: #383c44; position: relative; overflow: hidden; }
  .bar { display: flex; height: 40px; padding: 4px 0 0 5px; gap: 12px; flex: none; }
  .g { display: flex; gap: 2px; }
  .bar tool-button { width: 32px; height: 32px; font-size: 14px; font-weight: 500; }
  svg { display: block; flex: none; }
  callout-badge { position: absolute; left: 475px; top: 496px; }
`, () => `
  <dock-strip><dock-tab style="width:81px;padding-left:10px"><fit-text w="47">Viewport</fit-text></dock-tab></dock-strip>
  <div class="bar">
    <tool-button style="width:50px;gap:8px;padding-right:4px"><ui-icon name="gear" size="16"></ui-icon><ui-icon name="caretLine" size="8" style="margin-top:2px"></ui-icon></tool-button>
    <div class="g"><tool-button><ui-icon name="zoomIn"></ui-icon></tool-button><tool-button><ui-icon name="zoomOut"></ui-icon></tool-button><tool-button><ui-icon name="fit"></ui-icon></tool-button></div>
    <div class="g"><tool-button off><ui-icon name="waveUp"></ui-icon></tool-button><tool-button off><ui-icon name="waveDown"></ui-icon></tool-button></div>
    <div class="g"><tool-button><ui-icon name="layers"></ui-icon></tool-button><tool-button off><ui-icon name="video"></ui-icon></tool-button><tool-button><ui-icon name="play"></ui-icon></tool-button></div>
    <div class="g"><tool-button on><fit-text w="17">2D</fit-text></tool-button><tool-button><fit-text w="17.500">3D</fit-text></tool-button></div>
    <div class="g"><tool-button><ui-icon name="ball"></ui-icon></tool-button><tool-button><ui-icon name="orbit"></ui-icon></tool-button></div>
    <tool-button on><ui-icon name="lambda"></ui-icon></tool-button>
    <tool-button><ui-icon name="camRound"></ui-icon></tool-button>
  </div>${mapSvg()}<callout-badge>1</callout-badge>`);

define('callout-badge', `
  :host { display: flex; box-sizing: border-box; width: 44px; height: 44px; border-radius: 50%; background: #7ceb4b; color: #fff; font-weight: 900; font-size: 20px; align-items: center; justify-content: center; box-shadow: 2px 3px 3px rgba(0,0,0,.7); }
`, '<slot></slot>');

define('plugin-page', `
  :host { display: flex; flex-direction: column; background: #fff; color: #212529; font-size: 16px; }
  .page { padding: 48px 0 0 44px; }
  h2 { font-size: 28px; font-weight: 500; line-height: 34px; margin: 0 0 8px; }
  .card { border: 1px solid #dfdfdf; border-right: 0; border-radius: 4px 0 0 4px; height: 247px; padding: 32px 0 0 20px; width: 2106px; position: relative; }
  .in { padding-left: 20px; }
  p { margin: 0; line-height: 24px; }
  .row { display: flex; align-items: center; margin-top: 16px; }
  .line { height: 1px; background: #dcdcdc; margin: 12px 0 12px; }
  callout-badge { position: absolute; left: 229px; top: 60px; }
`, `
  <dock-strip style="color:#fff"><dock-tab style="width:104px"><fit-text w="72">LOCALHOST</fit-text></dock-tab></dock-strip>
  <div class="page"><h2><fit-text w="624">Selected stagedAsset -NIDD3dxTuXFTZMWSW5-</fit-text></h2>
  <div class="card">
    <div class="in"><p><fit-text w="386.500">Button below will export Object MetaData to excel file</fit-text></p>
      <div class="row"><action-button style="width:169px"><fit-text w="143">DownloadMetaData</fit-text></action-button></div></div>
    <div class="line"></div>
    <div class="in"><p><fit-text w="675">Section below allows you to compare uploaded file with stagedAsset, and eventually upload it</fit-text></p>
      <div class="row"><file-picker></file-picker><action-button style="width:130px"><fit-text w="104">Compare Data</fit-text></action-button></div></div>
    <callout-badge>2</callout-badge>
  </div></div>`);

define('action-button', `
  :host { display: flex; height: 38px; background: #3466fb; color: #fff; border-radius: 4px; align-items: center; justify-content: center; }
`, '<slot></slot>');

define('file-picker', `
  :host { display: flex; width: 337px; gap: 4px; align-items: center; padding-bottom: 4px; }
  .b { width: 97px; height: 30px; border: 1px solid #6c6c6c; border-radius: 2px; background: #eee; color: #000; display: flex; align-items: center; justify-content: center; }
`, '<div class="b"><fit-text w="81.500">Choose file</fit-text></div><fit-text w="103.500">No file chosen</fit-text>');

define('ui-icon', ':host { display: inline-flex; flex: none; } svg { display: block; overflow: visible; }', el => {
  const [w, h, body] = ICONS[el.getAttribute('name')];
  const k = el.hasAttribute('size') ? el.getAttribute('size') / h : 1;
  return `<svg width="${w * k}" height="${h * k}" viewBox="0 0 ${w} ${h}">${body}</svg>`;
});

// Text run tracked to a given advance width
define('fit-text', ':host { display: inline-block; white-space: nowrap; flex: none; }', '<slot></slot>', el => {
  const w = parseFloat(el.getAttribute('w')), n = el.textContent.length;
  const now = el.getBoundingClientRect().width;
  if (w && now) { el.style.letterSpacing = `${((w - now) / n).toFixed(3)}px`; }
});
</script>
</body>
</html>
